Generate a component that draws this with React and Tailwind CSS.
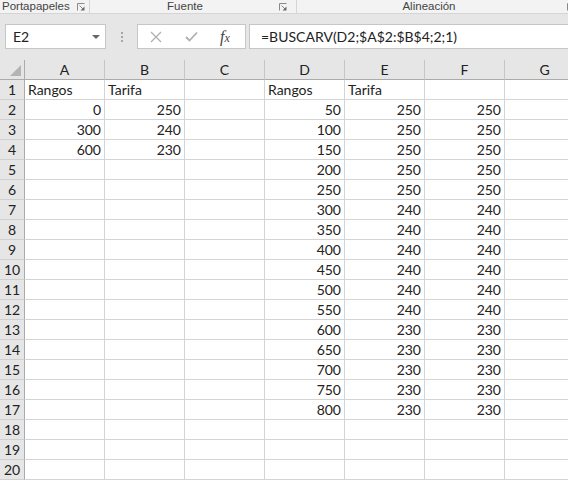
const cols = ["A", "B", "C", "D", "E", "F", "G"];

const leftTable = [
  [0, 250],
  [300, 240],
  [600, 230],
];

const rangos = [50, 100, 150, 200, 250, 300, 350, 400, 450, 500, 550, 600, 650, 700, 750, 800];

function tarifa(v) {
  if (v >= 600) return 230;
  if (v >= 300) return 240;
  return 250;
}

function buildRows() {
  const rows = [];
  for (let r = 1; r <= 20; r++) {
    const cells = Array(7).fill(null);
    if (r === 1) {
      cells[0] = { text: "Rangos" };
      cells[1] = { text: "Tarifa" };
      cells[3] = { text: "Rangos" };
      cells[4] = { text: "Tarifa" };
    }
    if (r >= 2 && r <= 4) {
      cells[0] = { text: leftTable[r - 2][0], num: true };
      cells[1] = { text: leftTable[r - 2][1], num: true };
    }
    if (r >= 2 && r <= 17) {
      const v = rangos[r - 2];
      cells[3] = { text: v, num: true };
      cells[4] = { text: tarifa(v), num: true };
      cells[5] = { text: tarifa(v), num: true };
    }
    rows.push(cells);
  }
  return rows;
}

function Launcher() {
  return (
    <svg width="8" height="8" viewBox="0 0 8 8" className="shrink-0">
      <path d="M0.5 7.5V0.5H7.5" fill="none" stroke="#8a8a8a" strokeWidth="1" />
      <path d="M2.5 2.5L6 6" stroke="#8a8a8a" strokeWidth="1" />
      <path d="M3.5 7.5H7.5V3.5Z" fill="#6a6a6a" />
    </svg>
  );
}

export default function App() {
  const rows = buildRows();
  return (
    <div
      className="h-[482px] w-[568px] overflow-hidden bg-white text-[#222]"
      style={{ fontFamily: "Lato, 'Liberation Sans', sans-serif" }}
    >
      {/* ribbon group labels */}
      <div
        className="flex h-[14px] border-b border-[#d5d5d5] bg-[#f3f3f3] text-[11.5px] leading-[13px] text-[#444]"
        style={{ fontFamily: "'Liberation Sans', sans-serif" }}
      >
        <div className="flex w-[90px] shrink-0 items-start border-r border-[#d5d5d5] pl-[2px] pr-[4px]">
          <span className="flex-1">Portapapeles</span>
          <span className="mt-[3px]"><Launcher /></span>
        </div>
        <div className="flex w-[207px] shrink-0 items-start border-r border-[#d5d5d5] pr-[3px]">
          <span className="w-[190px] text-center">Fuente</span>
          <span className="ml-[-1px] mt-[3px]"><Launcher /></span>
        </div>
        <div className="flex w-[280px] shrink-0 items-start">
          <span className="w-[264px] text-center">Alineación</span>
          <span className="ml-[6px] mt-[3px]"><Launcher /></span>
        </div>
      </div>

      {/* formula bar */}
      <div className="flex h-[46px] items-start bg-[#e6e6e6] pt-[10px]">
        <div className="ml-[5px] flex h-[25px] w-[101px] items-center border border-[#c6c6c6] bg-white pl-[7px] pr-[5px] text-[14px]">
          <span className="flex-1">E2</span>
          <svg width="8" height="4" viewBox="0 0 8 4">
            <path d="M0 0H8L4 4Z" fill="#666" />
          </svg>
        </div>
        <div className="flex h-[25px] w-[31px] flex-col items-center justify-center gap-[2px]">
          <span className="h-[2px] w-[2px] bg-[#a6a6a6]" />
          <span className="h-[2px] w-[2px] bg-[#a6a6a6]" />
          <span className="h-[2px] w-[2px] bg-[#a6a6a6]" />
        </div>
        <div className="flex h-[25px] w-[109px] items-center border border-[#c6c6c6] bg-white">
          <svg width="12" height="12" viewBox="0 0 12 12" className="ml-[12px]">
            <path d="M1 1L11 11M11 1L1 11" stroke="#b0b0b0" strokeWidth="1.3" />
          </svg>
          <svg width="13" height="11" viewBox="0 0 13 11" className="ml-[23px]">
            <path d="M1 6L4.5 9.5L12 1.5" fill="none" stroke="#b0b0b0" strokeWidth="1.8" />
          </svg>
          <span
            className="ml-[22px] text-[16px] italic text-[#444]"
            style={{ fontFamily: "'Liberation Serif', serif" }}
          >
            f<span className="text-[12px]">x</span>
          </span>
        </div>
        <div className="ml-[3px] flex h-[25px] flex-1 items-center border-y border-l border-[#c6c6c6] bg-white pl-[11px] text-[14px]">
          =BUSCARV(D2;$A$2:$B$4;2;1)
        </div>
      </div>

      {/* sheet grid */}
      <div className="grid grid-cols-[25px_repeat(7,80px)] text-[14px]">
        <div className="relative h-[20px] border-b border-r border-[#ababab] bg-[#e6e6e6]">
          <svg width="11" height="11" viewBox="0 0 11 11" className="absolute bottom-[3px] right-[3px]">
            <path d="M11 0V11H0Z" fill="#b4b4b4" />
          </svg>
        </div>
        {cols.map((c) => (
          <div
            key={c}
            className="flex h-[20px] items-center justify-center border-b border-r border-b-[#ababab] border-r-[#c6c6c6] bg-[#e6e6e6] text-[#222]"
          >
            {c}
          </div>
        ))}
        {rows.map((cells, i) => (
          <div key={i} className="contents">
            <div className="flex h-[20px] items-end justify-center border-b border-r border-b-[#d0d0d0] border-r-[#ababab] bg-[#e6e6e6] pb-[1px] leading-[17px]">
              {i + 1}
            </div>
            {cells.map((cell, j) => (
              <div
                key={j}
                className={`flex h-[20px] items-end overflow-visible whitespace-nowrap border-b border-r border-[#d4d4d4] px-[3px] pb-[1px] leading-[17px] ${
                  cell && cell.num ? "justify-end" : "justify-start"
                }`}
              >
                {cell ? cell.text : ""}
              </div>
            ))}
          </div>
        ))}
      </div>
    </div>
  );
}
